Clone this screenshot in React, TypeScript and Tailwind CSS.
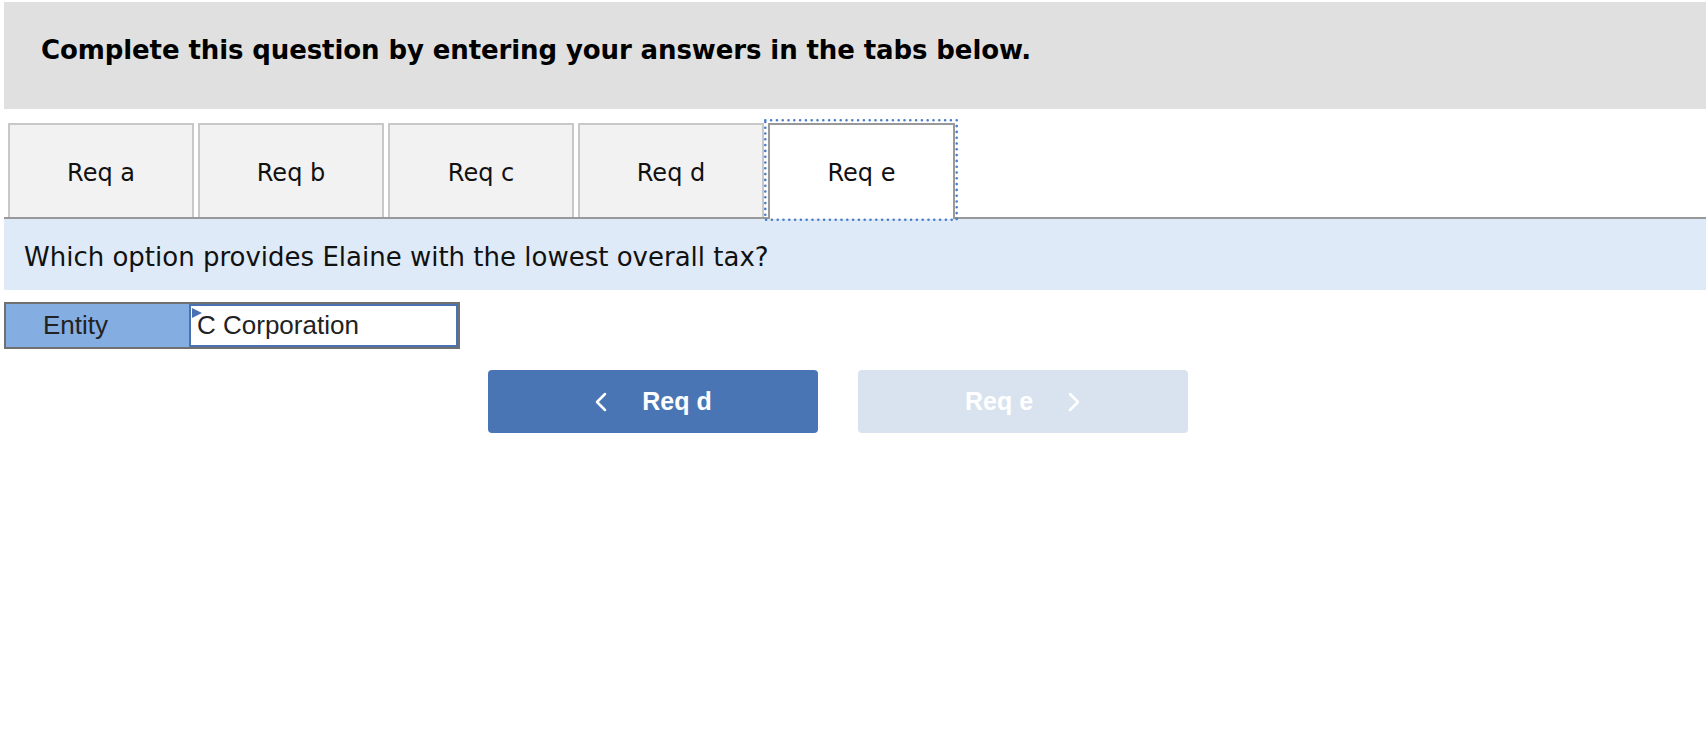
import React from "react";

function DottedRing() {
  return (
    <svg
      className="pointer-events-none absolute -left-[6px] -top-[6px]"
      width="194"
      height="102"
      viewBox="0 0 194 102"
    >
      <rect
        x="1.3"
        y="1.3"
        width="191.4"
        height="99.4"
        fill="none"
        stroke="#4a7cc6"
        strokeWidth="2.6"
        strokeLinecap="round"
        strokeDasharray="0 5.8"
      />
    </svg>
  );
}

function Tab({ label, active }: { label: string; active?: boolean }) {
  if (active) {
    return (
      <div className="relative z-10 -mb-[2px] flex h-[96px] w-[187px] items-center justify-center border-2 border-b-0 border-[#999999] bg-white pt-[2px] font-['DejaVu_Sans',Verdana,sans-serif] text-[24px] text-[#111]">
        {label}
        <DottedRing />
      </div>
    );
  }
  return (
    <div className="flex h-[94px] w-[186px] items-center justify-center border-2 border-b-0 border-[#c8c8c8] bg-[#f2f2f2] pt-[4px] font-['DejaVu_Sans',Verdana,sans-serif] text-[24px] text-[#111]">
      {label}
    </div>
  );
}

export default function App() {
  return (
    <div className="min-h-[732px] w-full bg-white pl-[4px] pr-[2px] pt-[2px]">
      <div className="h-[107px] bg-[#e0e0e0] pl-[37px] pt-[33px]">
        <h1 className="font-['DejaVu_Sans',Verdana,sans-serif] text-[26px] font-bold leading-[30px] tracking-[-0.1px] text-black">
          Complete this question by entering your answers in the tabs below.
        </h1>
      </div>

      <div className="mt-[14px] flex gap-[4px] border-b-2 border-[#999999] pl-[4px]">
        <Tab label="Req a" />
        <Tab label="Req b" />
        <Tab label="Req c" />
        <Tab label="Req d" />
        <Tab label="Req e" active />
      </div>

      <div className="flex h-[71px] items-center bg-[#deeaf7] pl-[20px] pt-[5px]">
        <p className="font-['DejaVu_Sans',Verdana,sans-serif] text-[26px] leading-[30px] text-[#111]">
          Which option provides Elaine with the lowest overall tax?
        </p>
      </div>

      <div className="mt-[12px] flex h-[47px] w-[456px] border-2 border-[#707070] font-['Liberation_Sans',Arial,sans-serif] text-[26px] text-[#222]">
        <div className="flex w-[183px] items-center bg-[#84ade1] pl-[37px]">Entity</div>
        <div className="relative flex flex-1 items-center border-2 border-[#4a72b2] bg-white pl-[6px]">
          <svg className="absolute left-[1px] top-[2px]" width="10" height="10" viewBox="0 0 10 10">
            <polygon points="0,0 10,5 0,10" fill="#4a72b2" />
          </svg>
          C Corporation
        </div>
      </div>

      <div className="mt-[21px] flex gap-[40px] pl-[484px] font-['Liberation_Sans',Arial,sans-serif] text-[25px] font-bold text-white">
        <button className="flex h-[63px] w-[330px] items-center justify-center gap-[35px] rounded-[4px] bg-[#4a75b5]">
          <svg width="13" height="20" viewBox="0 0 13 20" fill="none">
            <path d="M11 2 L3 10 L11 18" stroke="white" strokeWidth="2.5" strokeLinecap="round" strokeLinejoin="round" />
          </svg>
          <span>Req d</span>
        </button>
        <button className="flex h-[63px] w-[330px] items-center justify-center gap-[35px] rounded-[4px] bg-[#d9e3ef]">
          <span>Req e</span>
          <svg width="13" height="20" viewBox="0 0 13 20" fill="none">
            <path d="M2 2 L10 10 L2 18" stroke="white" strokeWidth="2.5" strokeLinecap="round" strokeLinejoin="round" />
          </svg>
        </button>
      </div>
    </div>
  );
}
